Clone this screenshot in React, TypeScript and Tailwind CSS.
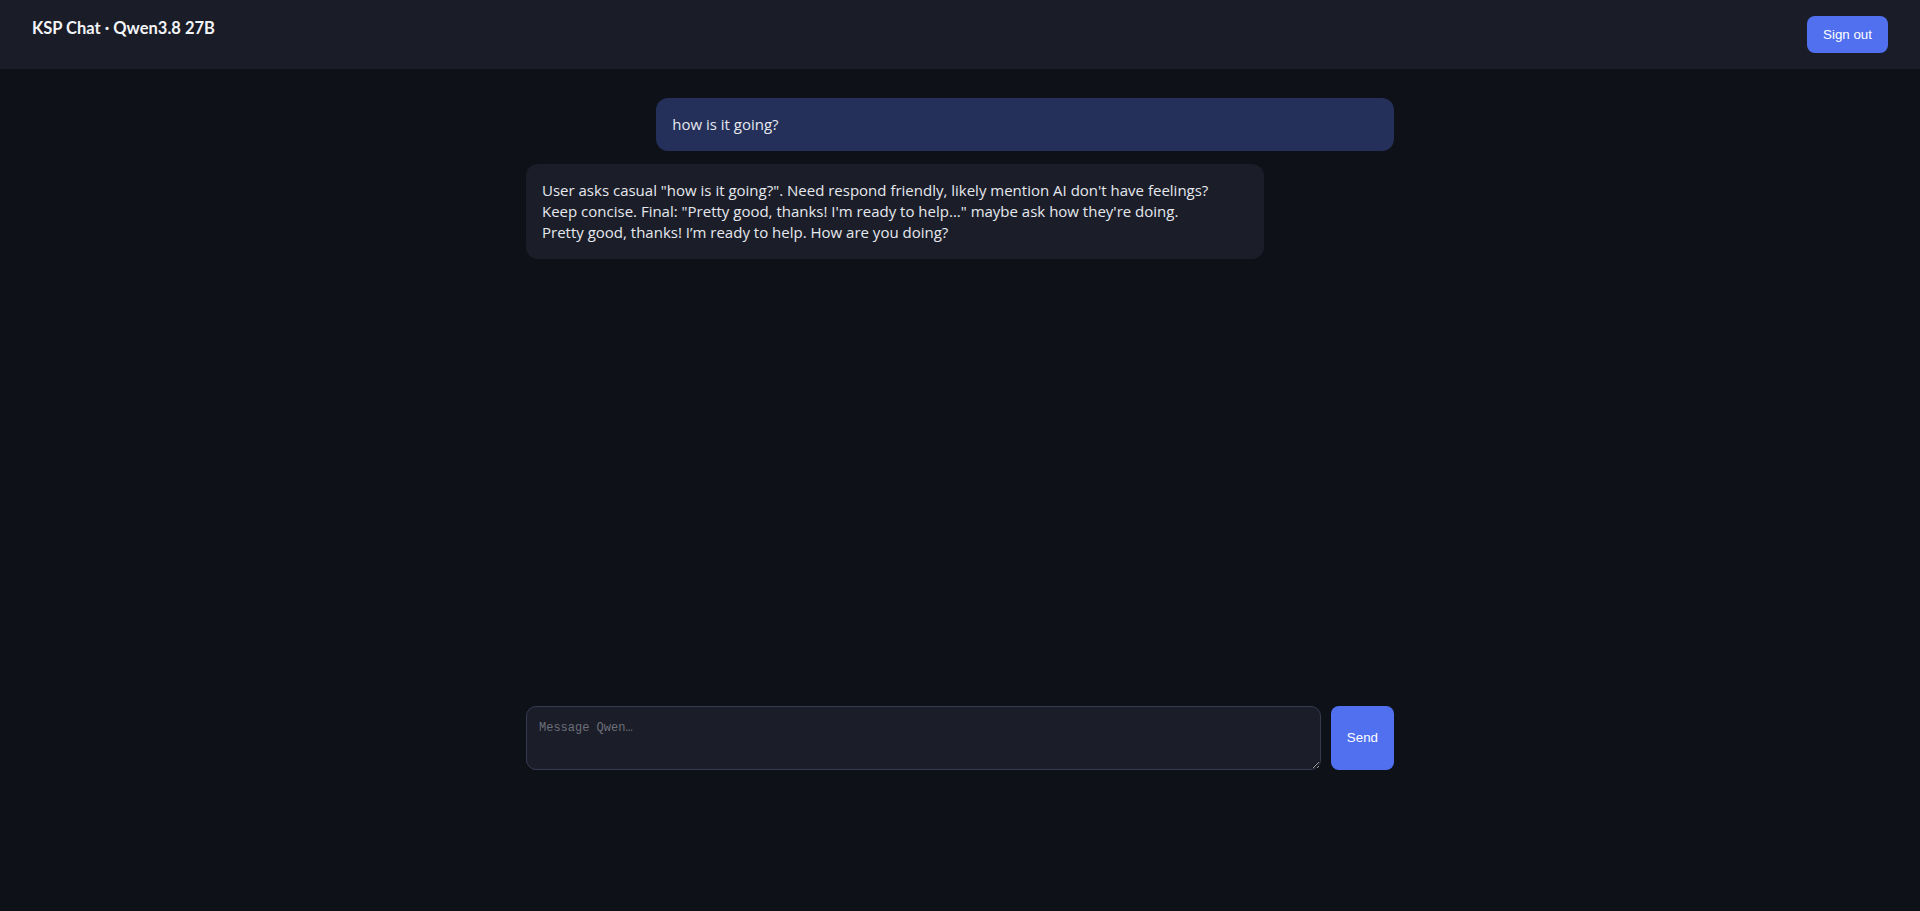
import { useState } from "react";

type Message = { role: "user" | "assistant"; content: string };

const initialMessages: Message[] = [
  { role: "user", content: "how is it going?" },
  {
    role: "assistant",
    content:
      'User asks casual "how is it going?". Need respond friendly, likely mention AI don\'t have feelings?\nKeep concise. Final: "Pretty good, thanks! I\'m ready to help..." maybe ask how they\'re doing.\nPretty good, thanks! I\u2019m ready to help. How are you doing?',
  },
];

export default function App() {
  const [messages, setMessages] = useState<Message[]>(initialMessages);
  const [draft, setDraft] = useState<string>("");

  const handleSubmit = (event: React.FormEvent<HTMLFormElement>) => {
    event.preventDefault();
    if (!draft.trim()) return;
    setMessages([...messages, { role: "user", content: draft }]);
    setDraft("");
  };

  return (
    <div className="flex h-screen flex-col bg-[#0e1118] text-[#e6e8ee] [font-family:'Open_Sans','Noto_Sans',sans-serif]">
      <header className="flex h-[69px] shrink-0 items-start justify-between bg-[#1a1d27] px-8 py-4">
        <h1 className="text-[16.5px] font-bold leading-6 text-[#f3f4f8] [font-family:Lato,sans-serif]">
          KSP Chat · Qwen3.8 27B
        </h1>
        <button className="h-[37px] rounded-lg bg-[#5170f0] px-4 text-[13.33px] text-white [font-family:'Liberation_Sans',Arial,sans-serif] hover:bg-[#5f7cf3]">
          Sign out
        </button>
      </header>

      <main className="mx-auto flex w-full max-w-[900px] flex-1 flex-col px-4">
        <div className="flex flex-1 flex-col gap-[13px] overflow-y-auto pt-[29px]">
          {messages.map((m, i) => (
            <div
              key={i}
              className={
                m.role === "user"
                  ? "w-[85%] self-end whitespace-pre-wrap rounded-xl bg-[#243059] p-4 text-[15px] leading-[21px]"
                  : "w-[85%] self-start whitespace-pre-wrap rounded-xl bg-[#1b1e29] p-4 text-[15px] leading-[21px]"
              }
            >
              {m.content}
            </div>
          ))}
        </div>

        <form onSubmit={handleSubmit} className="flex gap-[10px] pb-[141px]">
          <textarea
            className="h-16 flex-1 resize-y rounded-[10px] border border-[#363b50] bg-[#1b1e29] px-3 py-3 text-[12px] text-[#e6e8ee] placeholder-[#6c6f78] [font-family:'Liberation_Mono',monospace] focus:outline-none"
            placeholder="Message Qwen…"
            value={draft}
            onChange={(event) => setDraft(event.target.value)}
          />
          <button className="h-16 rounded-lg bg-[#5170f0] px-4 text-[13.33px] text-white [font-family:'Liberation_Sans',Arial,sans-serif] hover:bg-[#5f7cf3]">
            Send
          </button>
        </form>
      </main>
    </div>
  );
}
